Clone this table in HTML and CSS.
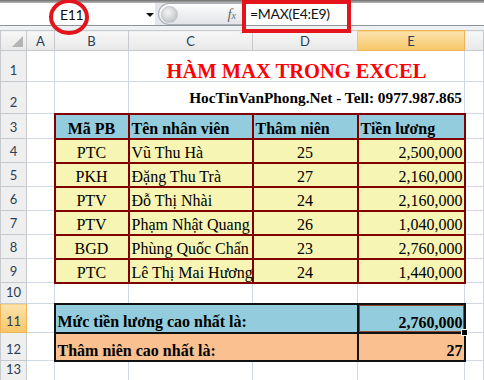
FILE: index.html
```html
<html>

<head>
    <meta charset="utf-8">
    <link rel="stylesheet" href="styles.css">
</head>

<body>

    <div class="formula-bar">
        <div class="name-box">
            <span class="cell-ref">E11</span>
            <span class="drop"></span>
        </div>
        <div class="fx-pill">
            <span class="knob"></span>
            <span class="fx">f<small>x</small></span>
        </div>
        <div class="formula">=MAX(E4:E9)</div>
    </div>

    <!-- red pen marks drawn over the bar -->
    <svg class="ring" width="100" height="40" viewBox="0 0 100 40">
        <ellipse cx="69" cy="17" rx="18" ry="16" fill="none" stroke="#e3141b" stroke-width="4" />
    </svg>
    <div class="frame"></div>

    <table class="sheet">
        <colgroup>
            <col style="width: 26px">
            <col style="width: 28px">
            <col style="width: 74px">
            <col style="width: 124px">
            <col style="width: 105px">
            <col style="width: 107px">
            <col>
        </colgroup>
        <tr class="heads">
            <th class="corner"><span class="tri"></span></th>
            <th>A</th>
            <th>B</th>
            <th>C</th>
            <th>D</th>
            <th class="on">E</th>
            <th></th>
        </tr>
        <tr class="r1">
            <th>1</th>
            <td></td>
            <td></td>
            <td colspan="3" class="title">HÀM MAX TRONG EXCEL</td>
            <td></td>
        </tr>
        <tr class="r2">
            <th>2</th>
            <td></td>
            <td></td>
            <td colspan="3" class="site">HocTinVanPhong.Net - Tell: 0977.987.865</td>
            <td></td>
        </tr>
        <tr class="r3">
            <th>3</th>
            <td></td>
            <td class="t head mid">Mã PB</td>
            <td class="t head">Tên nhân viên</td>
            <td class="t head">Thâm niên</td>
            <td class="t head">Tiền lương</td>
            <td></td>
        </tr>
        <tr class="row">
            <th>4</th>
            <td></td>
            <td class="t mid">PTC</td>
            <td class="t">Vũ Thu Hà</td>
            <td class="t mid">25</td>
            <td class="t num">2,500,000</td>
            <td></td>
        </tr>
        <tr class="row">
            <th>5</th>
            <td></td>
            <td class="t mid">PKH</td>
            <td class="t">Đặng Thu Trà</td>
            <td class="t mid">27</td>
            <td class="t num">2,160,000</td>
            <td></td>
        </tr>
        <tr class="row">
            <th>6</th>
            <td></td>
            <td class="t mid">PTV</td>
            <td class="t">Đỗ Thị Nhài</td>
            <td class="t mid">24</td>
            <td class="t num">2,160,000</td>
            <td></td>
        </tr>
        <tr class="row">
            <th>7</th>
            <td></td>
            <td class="t mid">PTV</td>
            <td class="t">Phạm Nhật Quang</td>
            <td class="t mid">26</td>
            <td class="t num">1,040,000</td>
            <td></td>
        </tr>
        <tr class="row">
            <th>8</th>
            <td></td>
            <td class="t mid">BGD</td>
            <td class="t">Phùng Quốc Chấn</td>
            <td class="t mid">23</td>
            <td class="t num">2,760,000</td>
            <td></td>
        </tr>
        <tr class="row">
            <th>9</th>
            <td></td>
            <td class="t mid">PTC</td>
            <td class="t">Lê Thị Mai Hương</td>
            <td class="t mid">24</td>
            <td class="t num">1,440,000</td>
            <td></td>
        </tr>
        <tr class="r10">
            <th>10</th>
            <td></td>
            <td></td>
            <td></td>
            <td></td>
            <td></td>
            <td></td>
        </tr>
        <tr class="r11">
            <th class="on">11</th>
            <td></td>
            <td colspan="3" class="sum blue label">Mức tiền lương cao nhất là:</td>
            <td class="sum blue num sel">2,760,000</td>
            <td></td>
        </tr>
        <tr class="r12">
            <th>12</th>
            <td></td>
            <td colspan="3" class="sum peach">Thâm niên cao nhất là:</td>
            <td class="sum peach num">27</td>
            <td></td>
        </tr>
        <tr class="r13">
            <th>13</th>
            <td></td>
            <td></td>
            <td></td>
            <td></td>
            <td></td>
            <td></td>
        </tr>
    </table>

</body>

</html>
```

FILE: styles.css
```css
body {
    margin: 0;
    width: 484px;
    height: 380px;
    overflow: hidden;
    position: relative;
    background: #fff;
}

/* name box + formula input */
.formula-bar {
    display: flex;
    height: 30px;
    box-sizing: border-box;
    padding: 3px 0 5px;
    background: linear-gradient(#6e6e6e 0, #b9b9b9 3px, #e3e6ea 3px, #e3e6ea 25px, #8d949c 25px, #8d949c 26px, #eef1f4 26px);
    font-family: Lato, "Noto Sans", sans-serif;
}
.name-box {
    width: 155px;
    background: #fff;
    display: flex;
    align-items: center;
    position: relative;
}
.cell-ref {
    margin-left: 60px;
    font-size: 14px;
    letter-spacing: -0.4px;
    color: #111;
}
.drop {
    position: absolute;
    left: 146px;
    top: 10px;
    border-left: 4px solid transparent;
    border-right: 4px solid transparent;
    border-top: 4px solid #111;
}
.fx-pill {
    width: 84px;
    margin-left: 3px;
    box-sizing: border-box;
    border: 1px solid #aab0b7;
    border-right: none;
    border-radius: 11px 0 0 11px;
    background: linear-gradient(#fdfdfd, #e2e4e7);
    display: flex;
    align-items: center;
    justify-content: space-between;
    padding: 0 6px 0 2px;
}
.knob {
    width: 15px;
    height: 15px;
    border-radius: 50%;
    background: radial-gradient(circle at 40% 35%, #f4f4f4, #b3b7bc);
    border: 1px solid #c2c6cb;
}
.fx {
    font-family: "Liberation Serif", serif;
    font-style: italic;
    font-size: 15px;
    color: #6b6b6b;
}
.fx small {
    font-size: 10px;
}
.formula {
    flex: 1;
    background: #fff;
    padding-left: 8px;
    font-size: 14px;
    line-height: 22px;
    letter-spacing: -0.3px;
    color: #111;
}

.ring {
    position: absolute;
    left: 0;
    top: 0;
}
.frame {
    position: absolute;
    left: 242px;
    top: 0;
    width: 109px;
    height: 33px;
    box-sizing: border-box;
    border: 4px solid #e3141b;
}

/* worksheet grid */
.sheet {
    border-collapse: collapse;
    table-layout: fixed;
    width: 484px;
    font-family: "Liberation Serif", serif;
    font-size: 16px;
    color: #000;
}
.sheet th {
    font-family: Lato, "Noto Sans", sans-serif;
    font-size: 13px;
    font-weight: normal;
    color: #2b3d55;
    background: linear-gradient(#f7f7f7, #e8e8e8);
    border: 1px solid #c6cacf;
    padding: 0;
}
.sheet tr:not(.heads) th {
    vertical-align: bottom;
    padding-bottom: 3px;
    background: #efefef;
}
.sheet th.on,
.sheet tr:not(.heads) th.on {
    background: linear-gradient(#fce3ad, #f6c667);
    border-color: #f0b257;
}
.corner {
    position: relative;
}
.tri {
    position: absolute;
    right: 3px;
    bottom: 3px;
    border-left: 11px solid transparent;
    border-bottom: 11px solid #b4b4b4;
}
.sheet td {
    border: 1px solid #d0d7e5;
    padding: 0 2px;
    vertical-align: bottom;
    white-space: nowrap;
    line-height: 19px;
}

.heads { height: 20px; }
.r1 { height: 31px; }
.r2 { height: 32px; }
.r3 { height: 25px; }
.row { height: 24px; }
.r10 { height: 21px; }
.r11 { height: 29px; }
.r12 { height: 28px; }
.r13 { height: 20px; }

.title {
    text-align: center;
    color: #ff0000;
    font-weight: bold;
    font-size: 20.5px;
    line-height: 24px;
    padding-bottom: 2px;
}
.site {
    text-align: right;
    vertical-align: middle !important;
    font-weight: bold;
    font-size: 15.3px;
    padding: 0 0 4px;
}

/* employee table */
.sheet td.t {
    border: 2px solid #800000;
    background: #f7f5b3;
}
.sheet td.head {
    background: #93cddd;
    font-weight: bold;
}
.mid { text-align: center; }
.num {
    text-align: right;
    padding-right: 1px !important;
}

/* totals block */
.sheet td.sum {
    border: 2px solid #111;
    font-weight: bold;
}
.blue { background: #93cddd; }
.peach { background: #fac090; }
.sheet td.label {
    padding-bottom: 1px;
}
.sheet td.sel {
    position: relative;
    box-shadow: inset 0 0 0 1px #8a4a32;
}
.sel::after {
    content: "";
    position: absolute;
    right: -4px;
    bottom: -4px;
    width: 5px;
    height: 5px;
    background: #000;
    border: 1px solid #fff;
}
```
